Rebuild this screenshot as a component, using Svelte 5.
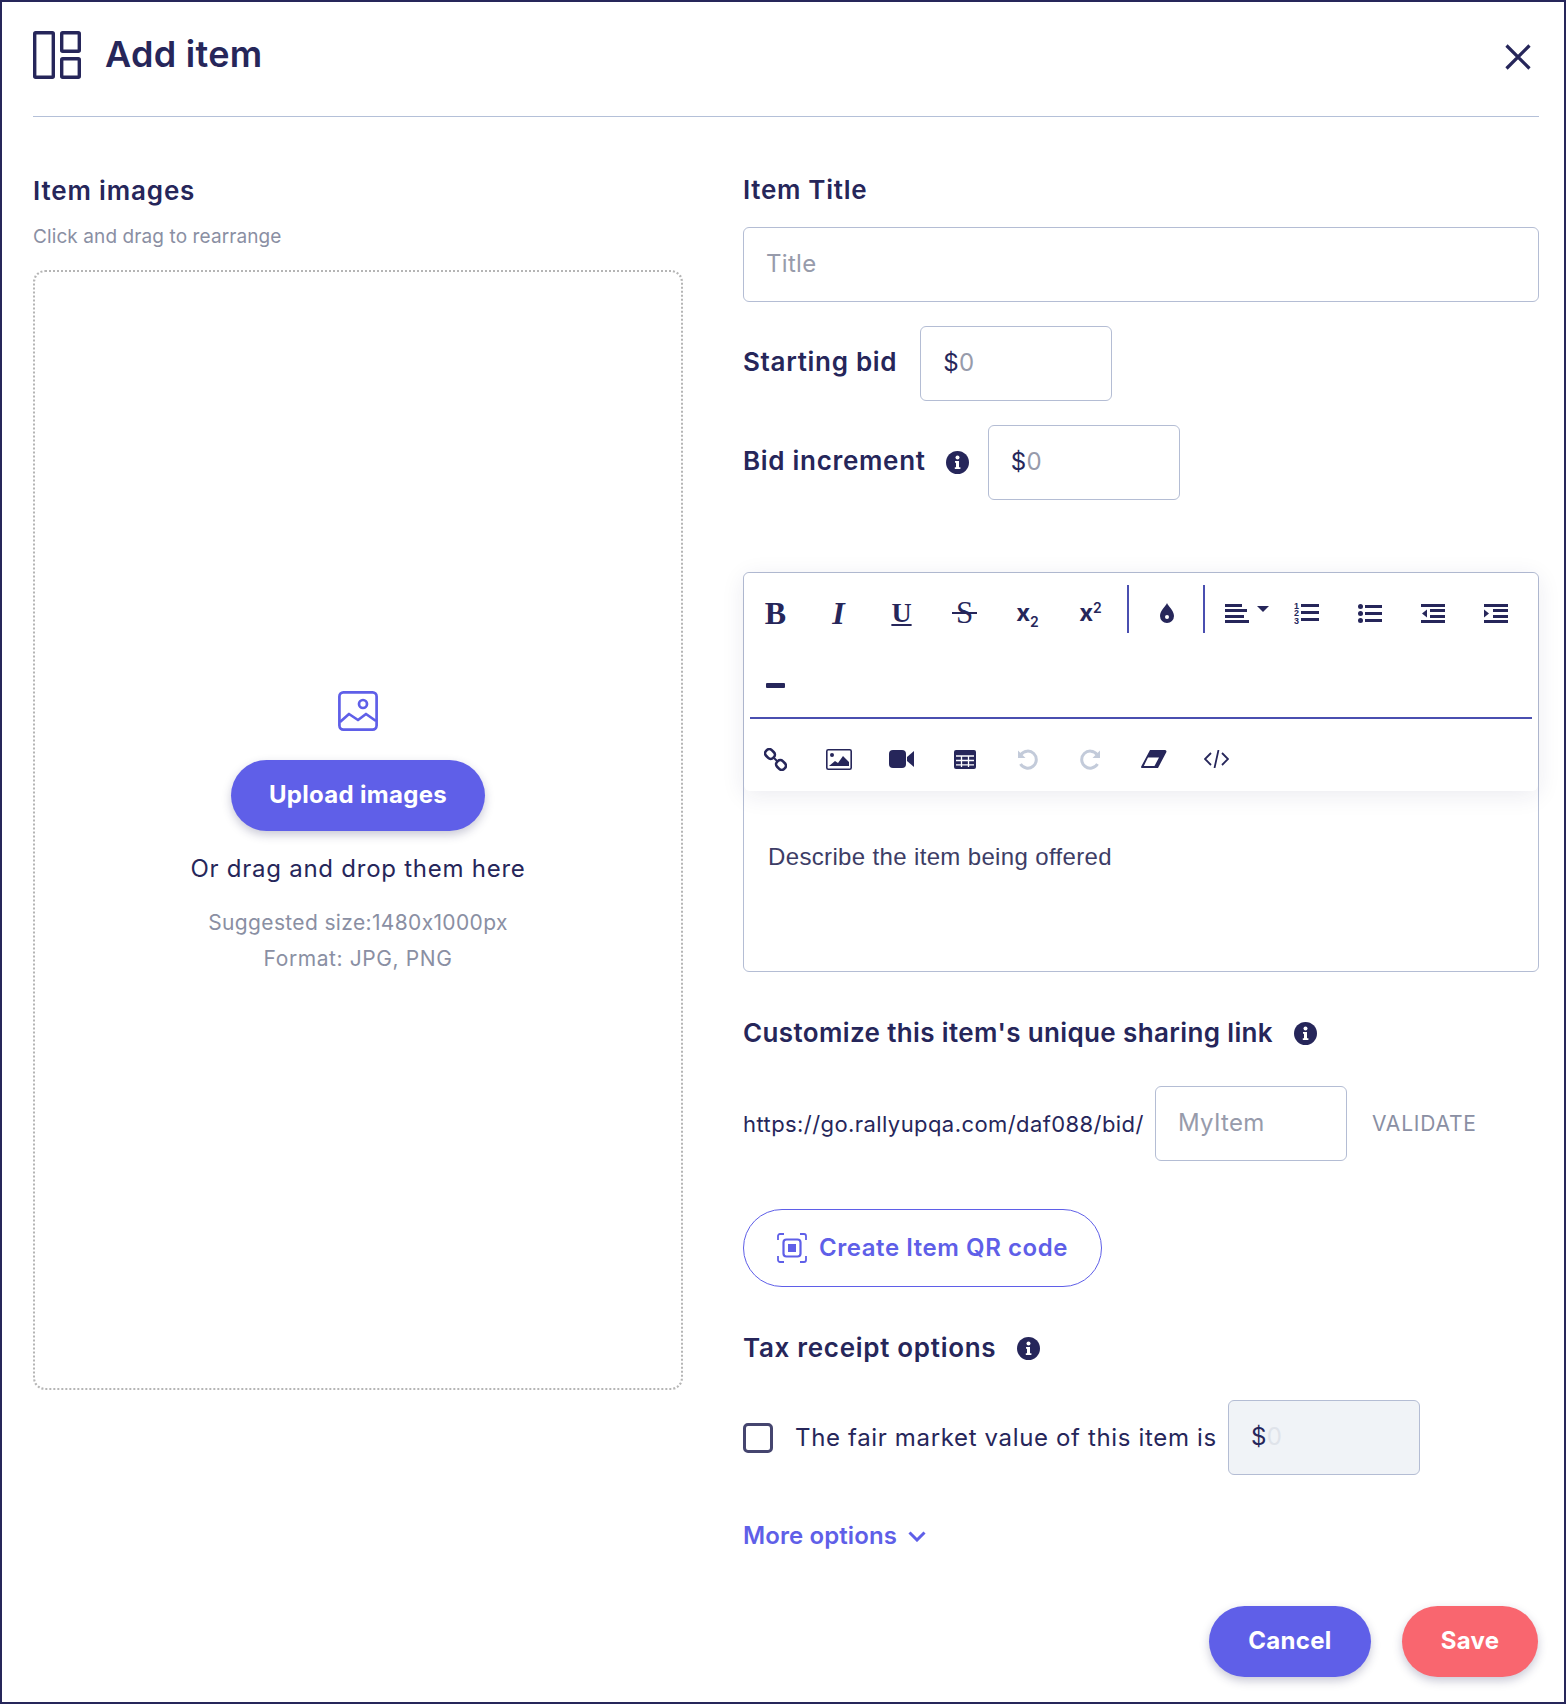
<script lang="ts">
  let title = $state('');
  let slug = $state('');
</script>

{#snippet info()}
  <svg class="info" width="23" height="23" viewBox="0 0 23 23">
    <circle cx="11.5" cy="11.5" r="11.5" fill="#26265a" />
    <circle cx="11.5" cy="6.5" r="2" fill="#fff" />
    <path d="M9 10h4v6.2h1.4V18H8.8v-1.8H10v-4.4H9z" fill="#fff" />
  </svg>
{/snippet}

<div class="modal">
  <header class="head">
    <svg width="48" height="48" viewBox="0 0 48 48" fill="none" stroke="#26265a" stroke-width="3.4">
      <rect x="1.7" y="1.7" width="18.6" height="44.6" rx="1" />
      <rect x="28.7" y="1.7" width="17.6" height="18.6" rx="1" />
      <rect x="28.7" y="27.7" width="17.6" height="18.6" rx="1" />
    </svg>
    <h1>Add item</h1>
    <svg class="close" width="26" height="26" viewBox="0 0 26 26" fill="none" stroke="#26265a" stroke-width="3.2">
      <path d="M1.5 1.5l23 23M24.5 1.5l-23 23" />
    </svg>
  </header>

  <div class="cols">
    <section class="left">
      <h3 class="images">Item images</h3>
      <p class="sub">Click and drag to rearrange</p>
      <div class="drop">
        <svg width="40" height="40" viewBox="0 0 40 40" fill="none" stroke="#5f5fe8" stroke-width="2.7">
          <rect x="1.4" y="1.4" width="37.2" height="37.2" rx="4" />
          <circle cx="25" cy="13" r="4" />
          <path d="M2 31l9-8 9 6 8-6 10 7" stroke-linejoin="round" />
        </svg>
        <button class="btn upload">Upload images</button>
        <p class="dragline">Or drag and drop them here</p>
        <p class="hint">Suggested size:1480x1000px</p>
        <p class="hint format">Format: JPG, PNG</p>
      </div>
    </section>

    <section class="right">
      <h3>Item Title</h3>
      <input class="input wide" placeholder="Title" bind:value={title} />

      <div class="row first">
        <h3>Starting bid</h3>
        <div class="input money"><span>$</span><em>0</em></div>
      </div>
      <div class="row second">
        <h3>Bid increment</h3>
        {@render info()}
        <div class="input money"><span>$</span><em>0</em></div>
      </div>

      <div class="editor">
        <div class="toolbar">
          <div class="tools top">
            <div class="tool glyph"><b>B</b></div>
            <div class="tool glyph"><b><i>I</i></b></div>
            <div class="tool glyph under"><span>U</span></div>
            <div class="tool glyph strike"><span>S</span></div>
            <div class="tool script"><span>x<sub>2</sub></span></div>
            <div class="tool script"><span>x<sup>2</sup></span></div>
            <div class="sep"></div>
            <div class="tool">
              <svg width="14" height="20" viewBox="0 0 14 20">
                <path d="M7 0c1 3 7 7.500 7 13a7 7 0 0 1-14 0C0 7.500 6 3 7 0z" fill="#26265a" />
                <circle cx="7" cy="14" r="2" fill="#fff" />
              </svg>
            </div>
            <div class="sep"></div>
            <div class="tool align">
              <svg width="44" height="19" viewBox="0 0 44 19" fill="#26265a">
                <rect width="17" height="3" /><rect y="5" width="22" height="3" /><rect y="11" width="19" height="3" /><rect y="16" width="24" height="3" />
                <path d="M32 2h12l-6 6z" />
              </svg>
            </div>
            <div class="tool">
              <svg width="25" height="24" viewBox="0 0 25 24" fill="#26265a">
                <text x="0" y="7.500" class="num">1</text><text x="0" y="15" class="num">2</text><text x="0" y="22.500" class="num">3</text>
                <rect x="7" y="3" width="18" height="3" /><rect x="7" y="10" width="18" height="3" /><rect x="7" y="17" width="18" height="3" />
              </svg>
            </div>
            <div class="tool">
              <svg width="24" height="19" viewBox="0 0 24 19" fill="#26265a">
                <circle cx="2.500" cy="2.500" r="2.500" /><circle cx="2.500" cy="9.500" r="2.500" /><circle cx="2.500" cy="16.500" r="2.500" />
                <rect x="7" y="1" width="17" height="3" /><rect x="7" y="8" width="17" height="3" /><rect x="7" y="15" width="17" height="3" />
              </svg>
            </div>
            <div class="tool">
              <svg width="24" height="19" viewBox="0 0 24 19" fill="#26265a">
                <rect width="24" height="3" /><rect x="9" y="5" width="15" height="3" /><rect x="9" y="11" width="15" height="3" /><rect y="16" width="24" height="3" />
                <path d="M6 5.500v8L1 9.500z" />
              </svg>
            </div>
            <div class="tool">
              <svg width="24" height="19" viewBox="0 0 24 19" fill="#26265a">
                <rect width="24" height="3" /><rect x="9" y="5" width="15" height="3" /><rect x="9" y="11" width="15" height="3" /><rect y="16" width="24" height="3" />
                <path d="M0 5.500v8l5-4z" />
              </svg>
            </div>
          </div>
          <div class="tools mid">
            <div class="tool"><div class="dash"></div></div>
          </div>
          <div class="tools bottom">
            <div class="tool">
              <svg width="23" height="23" viewBox="0 0 23 23" fill="none" stroke="#26265a" stroke-width="2.600">
                <rect x="-5" y="-4" width="10" height="8" rx="3.500" transform="translate(6 6) rotate(45)" />
                <rect x="-5" y="-4" width="10" height="8" rx="3.500" transform="translate(17 17) rotate(45)" />
                <path d="M10 10l3 3" stroke-width="2" />
              </svg>
            </div>
            <div class="tool">
              <svg width="26" height="21" viewBox="0 0 26 21">
                <rect x=".8" y=".8" width="24.400" height="19.400" rx="1.500" fill="none" stroke="#26265a" stroke-width="1.600" />
                <circle cx="6" cy="6" r="2" fill="#26265a" />
                <path d="M3 17l6-5 3 2 5-7 6 6v4z" fill="#26265a" />
              </svg>
            </div>
            <div class="tool">
              <svg width="25" height="18" viewBox="0 0 25 18" fill="#26265a">
                <rect width="17" height="18" rx="4" />
                <path d="M18 7l7-6v16l-7-6z" />
              </svg>
            </div>
            <div class="tool">
              <svg width="22" height="19" viewBox="0 0 22 19">
                <rect width="22" height="19" rx="2" fill="#26265a" />
                <path d="M2 6h18M2 10.500h18M2 14.800h18M7.500 6v11M14.500 6v11" stroke="#fff" stroke-width="1.300" />
              </svg>
            </div>
            <div class="tool">
              <svg width="21" height="21" viewBox="0 0 21 21" fill="none" stroke="#c3cbda" stroke-width="3">
                <path d="M4 5.500A8.500 8.500 0 1 1 3.500 15" />
                <path d="M1 1.500v7.500h7.500z" fill="#c3cbda" stroke="none" />
              </svg>
            </div>
            <div class="tool">
              <svg width="21" height="21" viewBox="0 0 21 21" fill="none" stroke="#c3cbda" stroke-width="3">
                <path d="M17 5.500A8.500 8.500 0 1 0 17.500 15" />
                <path d="M20 1.500v7.500h-7.500z" fill="#c3cbda" stroke="none" />
              </svg>
            </div>
            <div class="tool">
              <svg width="26" height="18" viewBox="0 0 26 18">
                <path d="M9 0h15a1.500 1.500 0 0 1 1.300 2.200L17 18H1a1 1 0 0 1-.8-1.500z" fill="#26265a" />
                <path d="M7 7.500h11l-4.500 8.500H2.800z" fill="#fff" />
              </svg>
            </div>
            <div class="tool">
              <svg width="25" height="18" viewBox="0 0 25 18" fill="none" stroke="#26265a" stroke-width="1.800">
                <path d="M7 3l-6 6 6 6M18 3l6 6-6 6M14.500 0l-4 18" />
              </svg>
            </div>
          </div>
        </div>
        <p class="placeholder">Describe the item being offered</p>
      </div>

      <div class="heading custom">
        <h3>Customize this item's unique sharing link</h3>
        {@render info()}
      </div>
      <div class="row url">
        <span class="link">https://go.rallyupqa.com/daf088/bid/</span>
        <input class="input slug" placeholder="MyItem" bind:value={slug} />
        <span class="validate">VALIDATE</span>
      </div>

      <button class="qr">
        <svg width="30" height="30" viewBox="0 0 30 30" fill="none" stroke="#5f5fe8" stroke-width="1.800">
          <path d="M7 1H3a2 2 0 0 0-2 2v4M23 1h4a2 2 0 0 1 2 2v4M7 29H3a2 2 0 0 1-2-2v-4M23 29h4a2 2 0 0 0 2-2v-4" />
          <rect x="6.500" y="6.500" width="17" height="17" rx="3" stroke-width="2.200" />
          <rect x="11" y="11" width="8" height="8" fill="#5f5fe8" stroke="none" />
        </svg>
        <span class="qrtext">Create Item QR code</span>
      </button>

      <div class="heading tax">
        <h3>Tax receipt options</h3>
        {@render info()}
      </div>
      <div class="row fair">
        <input class="check" type="checkbox" />
        <span class="fairtext">The fair market value of this item is</span>
        <div class="input money off"><span>$</span><em>0</em></div>
      </div>

      <div class="more">
        <span class="moretext">More options</span>
        <svg width="18" height="11" viewBox="0 0 18 11" fill="none" stroke="#5f5fe8" stroke-width="3">
          <path d="M1.500 1.500L9 9l7.500-7.500" />
        </svg>
      </div>

      <div class="actions">
        <button class="btn cancel">Cancel</button>
        <button class="btn save">Save</button>
      </div>
    </section>
  </div>
</div>

<style>
  :global(body) {
    margin: 0;
    background: #fff;
  }

  .modal {
    box-sizing: border-box;
    width: 1566px;
    height: 1704px;
    border: 2px solid #26265a;
    padding: 0 25px 0 31px;
    color: #26265a;
    font-family: Inter, "Open Sans", sans-serif;
    font-feature-settings: "calt" 0;
    overflow: hidden;
  }

  .head {
    display: flex;
    align-items: center;
    box-sizing: border-box;
    height: 115px;
    padding-top: 1px;
    padding-bottom: 9px;
    border-bottom: 1px solid #b4c0d8;
  }

  h1 {
    margin: 0 0 2px 24px;
    font-size: 36px;
    line-height: 44px;
    font-weight: 600;
    letter-spacing: 0.3px;
  }

  .close {
    margin-left: auto;
    margin-right: 8px;
    margin-top: 3px;
  }

  .cols {
    display: grid;
    grid-template-columns: 650px 796px;
    column-gap: 60px;
  }

  h3 {
    margin: 0;
    font-size: 26px;
    line-height: 30px;
    font-weight: 600;
    letter-spacing: 0.7px;
    white-space: nowrap;
  }

  .images {
    letter-spacing: 0.85px;
  }

  .left {
    padding-top: 59px;
  }

  .sub {
    margin: 19px 0 21px;
    font-size: 19px;
    line-height: 24px;
    letter-spacing: 0.1px;
    color: #8a8fa3;
  }

  .drop {
    box-sizing: border-box;
    height: 1120px;
    padding-top: 7px;
    border: 2px dotted #b5b5b5;
    border-radius: 12px;
    display: flex;
    flex-direction: column;
    align-items: center;
    justify-content: center;
  }

  .btn {
    height: 71px;
    padding: 0 0 2px;
    border: 0;
    border-radius: 36px;
    color: #fff;
    font-family: inherit;
    font-size: 24px;
    font-weight: 700;
    letter-spacing: 0.3px;
    background: #5f5fe8;
    box-shadow: 0 4px 10px rgba(38, 38, 90, 0.25);
  }

  .upload {
    width: 254px;
    margin-top: 29px;
  }

  .dragline {
    margin: 22px 0 0;
    font-size: 24px;
    line-height: 32px;
    letter-spacing: 0.75px;
    color: #26265a;
  }

  .hint {
    margin: 0;
    font-size: 21px;
    line-height: 36px;
    letter-spacing: 0.35px;
    color: #8a8fa3;
  }

  .format {
    letter-spacing: 0.6px;
  }

  .dragline + .hint {
    margin-top: 20px;
  }

  .right {
    padding-top: 58px;
  }

  .input {
    box-sizing: border-box;
    width: 192px;
    height: 75px;
    border: 1px solid #b4bdd4;
    border-radius: 6px;
    padding: 0 22px 2px;
    font-family: inherit;
    font-size: 24px;
    letter-spacing: 0.3px;
    color: #26265a;
    background: #fff;
    outline: none;
  }

  .input::placeholder {
    color: #979bab;
  }

  .wide {
    display: block;
    width: 796px;
    margin-top: 22px;
  }

  .row {
    display: flex;
    align-items: center;
  }

  .first,
  .second {
    margin-top: 24px;
  }

  .first h3,
  .second h3 {
    padding-bottom: 4px;
  }

  .first {
    gap: 23px;
  }

  .second .info {
    margin: 0 19px 0 20px;
  }

  .money {
    display: flex;
    align-items: center;
  }

  .money em {
    font-style: normal;
    color: #979bab;
  }

  .off {
    background: #f0f3f7;
  }

  .off em {
    color: #dfe3ea;
  }

  .editor {
    box-sizing: border-box;
    height: 400px;
    margin-top: 72px;
    border: 1px solid #b4bdd4;
    border-radius: 6px;
  }

  .toolbar {
    height: 218px;
    background: #fff;
    border-radius: 6px;
    box-shadow: 0 4px 24px rgba(38, 38, 90, 0.09);
  }

  .tools {
    display: flex;
    align-items: center;
    box-sizing: border-box;
  }

  .top {
    height: 76px;
    padding-top: 4px;
  }

  .mid {
    height: 70px;
    margin: 0 6px;
    padding-top: 5px;
    border-bottom: 2px solid #4a4fb0;
  }

  .mid .tool {
    margin-left: -6px;
  }

  .bottom {
    height: 72px;
    padding-top: 8px;
  }

  .tool {
    flex: none;
    width: 63px;
    display: flex;
    align-items: center;
    justify-content: center;
    color: #26265a;
  }

  .glyph {
    font-family: "Liberation Serif", serif;
    font-size: 32px;
    line-height: 34px;
  }

  .under span {
    font-weight: 700;
    text-decoration: underline;
    font-size: 28px;
  }

  .strike span {
    position: relative;
    font-size: 31px;
  }

  .strike span::after {
    content: "";
    position: absolute;
    left: -4px;
    right: -4px;
    top: 16px;
    height: 2px;
    background: #26265a;
  }

  .script {
    font-family: Inter, sans-serif;
    font-weight: 700;
    font-size: 24px;
    line-height: 34px;
  }

  .script sub,
  .script sup {
    font-size: 14px;
    font-weight: 600;
    line-height: 0;
  }

  .script sub {
    vertical-align: -6px;
  }

  .script sup {
    vertical-align: 8px;
  }

  .sep {
    flex: none;
    width: 2px;
    height: 48px;
    margin: 0 6px 8px 5px;
    background: #4a4fb0;
  }

  .align {
    width: 64px;
    justify-content: flex-start;
    padding-left: 14px;
    box-sizing: border-box;
  }

  .num {
    font-family: "Liberation Sans", sans-serif;
    font-size: 9px;
    font-weight: 700;
  }

  .dash {
    width: 19px;
    height: 5px;
    border-radius: 1px;
    background: #26265a;
  }

  .placeholder {
    margin: 51px 0 0 24px;
    font-family: "Liberation Sans", sans-serif;
    font-size: 24px;
    line-height: 30px;
    letter-spacing: 0.35px;
    color: #3d3d66;
  }

  .heading {
    display: flex;
    align-items: center;
    gap: 21px;
  }

  .custom {
    margin-top: 46px;
  }

  .custom h3 {
    letter-spacing: 0.37px;
  }

  .url {
    margin-top: 38px;
  }

  .link {
    width: 412px;
    font-size: 22px;
    letter-spacing: 0.42px;
    white-space: nowrap;
  }

  .validate {
    margin-left: 25px;
    font-size: 21px;
    letter-spacing: 0.8px;
    color: #8a8fa3;
  }

  .qr {
    display: flex;
    align-items: center;
    gap: 12px;
    box-sizing: border-box;
    width: 359px;
    height: 78px;
    margin-top: 48px;
    padding: 0 0 0 33px;
    border: 1.5px solid #5f5fe8;
    border-radius: 39px;
    background: #fff;
    color: #5f5fe8;
    font-family: inherit;
    font-size: 24px;
    font-weight: 600;
    letter-spacing: 0.55px;
    white-space: nowrap;
  }

  .qrtext,
  .moretext {
    padding-bottom: 2px;
  }

  .tax {
    margin-top: 46px;
  }

  .fair {
    margin-top: 37px;
  }

  .check {
    appearance: none;
    box-sizing: border-box;
    width: 30px;
    height: 30px;
    margin: 0 22px 0 0;
    border: 3px solid #45456f;
    border-radius: 5px;
  }

  .fairtext {
    width: 433px;
    font-size: 24px;
    letter-spacing: 0.65px;
    white-space: nowrap;
  }

  .more {
    display: flex;
    align-items: center;
    gap: 11px;
    margin-top: 46px;
    height: 30px;
    color: #5f5fe8;
    font-size: 24px;
    font-weight: 600;
    letter-spacing: 0.1px;
  }

  .actions {
    display: flex;
    justify-content: flex-end;
    gap: 31px;
    margin-top: 55px;
    padding-right: 1px;
  }

  .cancel {
    width: 162px;
  }

  .save {
    width: 136px;
    background: #f9666f;
  }
</style>
